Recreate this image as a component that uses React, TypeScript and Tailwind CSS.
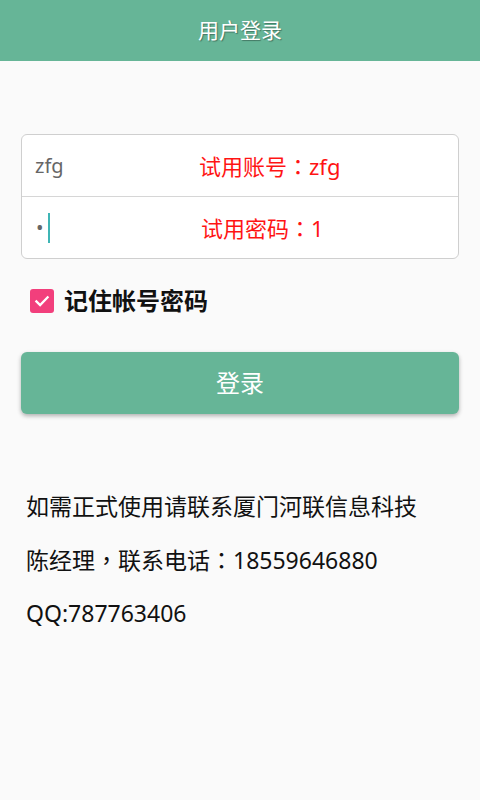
import React from 'react'

// fullwidth punctuation centred in the em box, as in the reference
const P = ({ children }: { children: React.ReactNode }) => (
  <span style={{ fontFamily: '"Noto Sans CJK TC", sans-serif' }}>{children}</span>
)

const App = () => {
  return (
    <div
      className='w-[480px] h-[800px] bg-[#fafafa] flex flex-col'
      style={{ fontFamily: '"Noto Sans", "Noto Sans CJK SC", sans-serif' }}
    >
      {/* Header */}
      <div className='h-[61px] bg-[#66b597] flex items-center justify-center'>
        <h1 className='text-[21px] text-white [text-shadow:1px_1px_1px_rgba(0,0,0,0.35)]'>用户登录</h1>
      </div>

      <div className='px-[21px] pt-[73px] flex flex-col'>
        {/* Inputs card */}
        <div className='bg-white border border-[#cfcfcf] rounded-[6px] flex flex-col'>
          <div className='h-[61px] flex items-center relative'>
            <span className='pl-[13px] text-[20px] text-[#666666]'>zfg</span>
            <span className='absolute left-[177px] text-[22px] text-[#ff1414]'>试用账号<P>：</P>zfg</span>
          </div>
          <div className='h-px bg-[#d6d6d6]' />
          <div className='h-[61px] flex items-center relative'>
            <span className='pl-[14px] text-[20px] text-[#666666] leading-none'>•</span>
            <span className='ml-[4px] w-[2px] h-[30px] bg-[#3fb5b5]' />
            <span className='absolute left-[179px] text-[22px] text-[#ff1414]'>试用密码<P>：</P>1</span>
          </div>
        </div>

        {/* Remember */}
        <div className='flex items-center mt-[24px] ml-[9px] gap-[10px]'>
          <div className='w-[24px] h-[24px] rounded-[3px] bg-[#f23f7c] flex items-center justify-center'>
            <svg width='18' height='18' viewBox='0 0 24 24' fill='none' stroke='white' strokeWidth='3' strokeLinecap='square'>
              <path d='M4.5 12.5l5 5L19.5 7' />
            </svg>
          </div>
          <span className='text-[24px] font-bold text-[#111111]'>记住帐号密码</span>
        </div>

        {/* Login button */}
        <button className='mt-[33px] h-[62px] w-full rounded-[6px] bg-[#66b597] text-white text-[24px] shadow-[0_2px_4px_rgba(0,0,0,0.3)]'>
          登录
        </button>

        {/* Contact info */}
        <div className='mt-[76px] ml-[5px] flex flex-col gap-[21px] text-[23px] text-[#111111] leading-[32px]'>
          <p>如需正式使用请联系厦门河联信息科技</p>
          <p>陈经理<P>，</P>联系电话<P>：</P>18559646880</p>
          <p>QQ:787763406</p>
        </div>
      </div>
    </div>
  )
}

export default App
